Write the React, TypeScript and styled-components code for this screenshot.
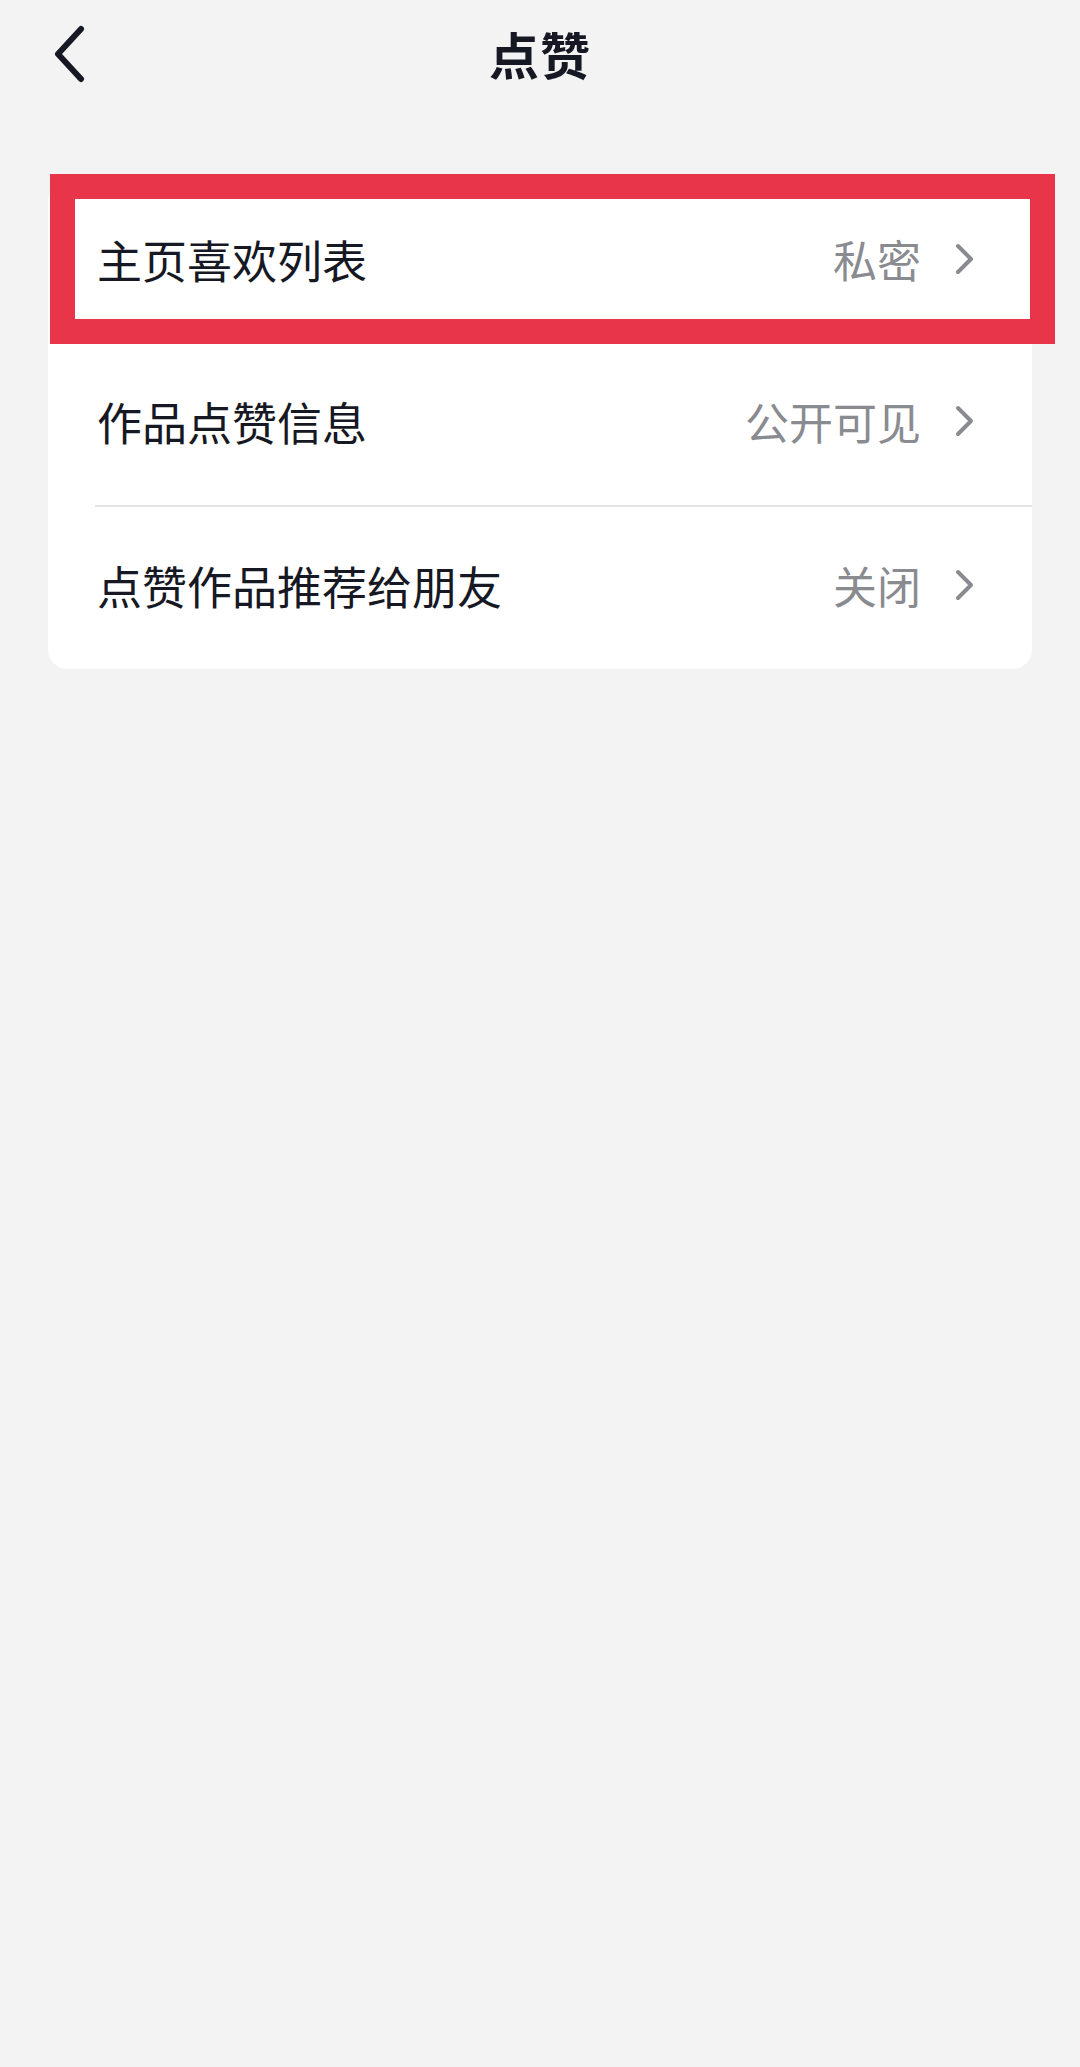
import styled, { createGlobalStyle } from "styled-components";

const GlobalStyle = createGlobalStyle`
  html, body {
    margin: 0;
    padding: 0;
    background: #f3f3f3;
  }
  body {
    font-family: "Noto Sans CJK SC", "Noto Sans", sans-serif;
  }
`;

const Page = styled.div`
  position: relative;
  min-height: 2067px;
  background: #f3f3f3;
`;

const NavBar = styled.div`
  position: relative;
  height: 112px;
  box-sizing: border-box;
  padding-bottom: 6px;
  display: flex;
  align-items: center;
  justify-content: center;
`;

const BackButton = styled.button`
  position: absolute;
  left: 48px;
  top: 24px;
  width: 42px;
  height: 60px;
  padding: 0;
  border: none;
  background: transparent;
  display: flex;
  align-items: center;
  justify-content: center;
`;

const Title = styled.h1`
  margin: 0;
  font-size: 50px;
  font-weight: 700;
  color: #161823;
  letter-spacing: 1px;
`;

const Card = styled.div`
  margin: 69px 48px 0;
  background: #ffffff;
  border-radius: 20px;
  overflow: hidden;
`;

const Row = styled.div`
  height: 162px;
  box-sizing: border-box;
  display: flex;
  align-items: center;
  justify-content: space-between;
  padding: 0 57px 6px 49px;
`;

const Divider = styled.div`
  height: 2px;
  margin-left: 47px;
  background: #e4e4e6;
`;

const Label = styled.span`
  font-size: 45px;
  color: #161823;
`;

const Value = styled.span`
  display: flex;
  align-items: center;
  gap: 34px;
  font-size: 44px;
  color: #8a8b90;
`;

const Highlight = styled.div`
  position: absolute;
  left: 50px;
  top: 174px;
  width: 1005px;
  height: 170px;
  box-sizing: border-box;
  border: 25px solid #e9354a;
  pointer-events: none;
`;

const ChevronLeft = () => (
  <svg width="34" height="58" viewBox="0 0 34 58">
    <path
      d="M29 4 L6 29 L29 54"
      fill="none"
      stroke="#161823"
      strokeWidth="6"
      strokeLinecap="round"
      strokeLinejoin="round"
    />
  </svg>
);

const ChevronRight = () => (
  <svg width="20" height="32" viewBox="0 0 20 32">
    <path
      d="M3 3 L16 16 L3 29"
      fill="none"
      stroke="#8a8b90"
      strokeWidth="4"
      strokeLinecap="round"
      strokeLinejoin="round"
    />
  </svg>
);

const settings = [
  { label: "主页喜欢列表", value: "私密" },
  { label: "作品点赞信息", value: "公开可见" },
  { label: "点赞作品推荐给朋友", value: "关闭" },
];

export default function App() {
  return (
    <Page>
      <GlobalStyle />
      <NavBar>
        <BackButton>
          <ChevronLeft />
        </BackButton>
        <Title>点赞</Title>
      </NavBar>
      <Card>
        {settings.map((item, i) => (
          <div key={item.label}>
            {i === 2 && <Divider />}
            <Row>
              <Label>{item.label}</Label>
              <Value>
                {item.value}
                <ChevronRight />
              </Value>
            </Row>
          </div>
        ))}
      </Card>
      <Highlight />
    </Page>
  );
}
